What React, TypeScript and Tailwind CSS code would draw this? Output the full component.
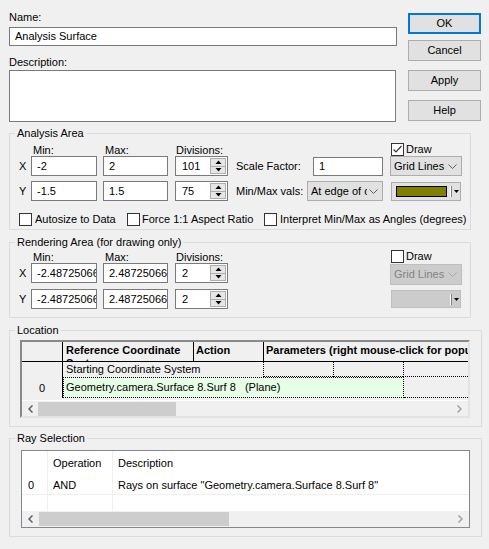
import React from "react";

const F = "font-['Liberation_Sans',Arial,sans-serif]";

function TextBox({ value, className = "" }: { value: string; className?: string }) {
  return (
    <div
      className={`border border-[#7a7a7a] bg-white pl-[5px] flex items-center overflow-hidden whitespace-nowrap shrink-0 ${className}`}
    >
      {value}
    </div>
  );
}

function Spinner({ value, className = "" }: { value: string; className?: string }) {
  return (
    <div className={`w-[53px] h-[20px] border border-[#7a7a7a] bg-white flex shrink-0 ${className}`}>
      <div className="flex-1 pl-[6px] flex items-center">{value}</div>
      <div className="w-[16px] my-[1px] mr-[1px] flex flex-col border border-[#adadad] bg-[#e6e6e6]">
        <div className="flex-1 flex items-center justify-center border-b border-[#adadad]">
          <svg width="7" height="4" viewBox="0 0 7 4">
            <path d="M0.5 4 L3.5 0.5 L6.5 4 Z" fill="#000" />
          </svg>
        </div>
        <div className="flex-1 flex items-center justify-center">
          <svg width="7" height="4" viewBox="0 0 7 4">
            <path d="M0.5 0 L3.5 3.5 L6.5 0 Z" fill="#000" />
          </svg>
        </div>
      </div>
    </div>
  );
}

function Select({
  text,
  className = "",
  disabled = false,
}: {
  text: string;
  className?: string;
  disabled?: boolean;
}) {
  return (
    <div
      className={`flex items-center border pl-[3px] pr-[4px] shrink-0 ${
        disabled
          ? "border-[#bfbfbf] bg-[#cccccc] text-[#838383]"
          : "border-[#adadad] bg-[#e1e1e1]"
      } ${className}`}
    >
      <span className="flex-1 overflow-hidden whitespace-nowrap mr-[2px]">{text}</span>
      <svg width="9" height="5" viewBox="0 0 9 5" className="shrink-0">
        <path
          d="M0.5 0.5 L4.5 4.5 L8.5 0.5"
          fill="none"
          stroke={disabled ? "#a8a8a8" : "#606060"}
          strokeWidth="1"
        />
      </svg>
    </div>
  );
}

function ColorButton({ disabled = false, className = "" }: { disabled?: boolean; className?: string }) {
  return (
    <div
      className={`w-[70px] flex items-center border pl-[4px] shrink-0 ${
        disabled ? "border-[#bfbfbf] bg-[#cccccc]" : "border-[#adadad] bg-[#e1e1e1]"
      } ${className}`}
    >
      <div
        className={`w-[51px] h-[11px] ${disabled ? "" : "border border-black bg-[#808000]"}`}
      />
      <div className="ml-[3px] w-[1px] h-[11px] bg-white" />
      <div className="w-[1px] h-[11px] bg-[#808080]" />
      <svg className="ml-[2px]" width="5" height="3" viewBox="0 0 5 3">
        <path d="M0 0 L2.5 3 L5 0 Z" fill="#000" />
      </svg>
    </div>
  );
}

function Check({ checked = false }: { checked?: boolean }) {
  return (
    <div className="w-[13px] h-[13px] border border-[#333333] bg-white flex items-center justify-center shrink-0">
      {checked && (
        <svg width="11" height="11" viewBox="0 0 11 11">
          <path d="M1.5 5.5 L4 8 L9.5 2" fill="none" stroke="#333333" strokeWidth="1.2" />
        </svg>
      )}
    </div>
  );
}

function Group({
  title,
  className = "",
  children,
}: {
  title: string;
  className?: string;
  children: React.ReactNode;
}) {
  return (
    <fieldset className={`border border-[#dcdcdc] ml-[9px] ${className}`}>
      <legend className="ml-[5px] px-[2px] leading-[14px]">{title}</legend>
      {children}
    </fieldset>
  );
}

function Button({ label, primary = false, className = "" }: { label: string; primary?: boolean; className?: string }) {
  return (
    <div
      className={`w-[73px] h-[21px] flex items-center justify-center bg-[#e1e1e1] ${
        primary ? "border-2 border-[#0078d7]" : "border border-[#adadad]"
      } ${className}`}
    >
      {label}
    </div>
  );
}

function ScrollBar({ thumbLeft, thumbWidth }: { thumbLeft: string; thumbWidth: string }) {
  return (
    <div className="h-[16px] flex items-center bg-[#f0f0f0]">
      <div className={`${thumbLeft} h-full flex items-center justify-center`}>
        <svg width="5" height="8" viewBox="0 0 5 8">
          <path d="M4.5 0.5 L1 4 L4.5 7.5" fill="none" stroke="#606060" strokeWidth="1.5" />
        </svg>
      </div>
      <div className={`${thumbWidth} h-[14px] bg-[#cdcdcd]`} />
      <div className="flex-1" />
      <div className="w-[17px] h-full flex items-center justify-center">
        <svg width="5" height="8" viewBox="0 0 5 8">
          <path d="M0.5 0.5 L4 4 L0.5 7.5" fill="none" stroke="#a0a0a0" strokeWidth="1.5" />
        </svg>
      </div>
    </div>
  );
}

export default function App() {
  return (
    <div className={`w-[489px] h-[549px] bg-[#f0f0f0] text-[11px] text-black overflow-hidden ${F}`}>
      {/* --- Name / Description + buttons --- */}
      <div className="flex pl-[9px]">
        <div className="w-[388px] pt-[10px]">
          <div className="h-[14px] leading-[14px]">Name:</div>
          <TextBox value="Analysis Surface" className="mt-[3px] h-[19px] w-[388px]" />
          <div className="mt-[9px] h-[14px] leading-[14px]">Description:</div>
          <div className="mt-[1px] w-[387px] h-[52px] border border-[#7a7a7a] bg-white" />
        </div>
        <div className="ml-[11px]">
          <Button label="OK" primary className="mt-[13px]" />
          <Button label="Cancel" className="mt-[6px]" />
          <Button label="Apply" className="mt-[9px]" />
          <Button label="Help" className="mt-[9px]" />
        </div>
      </div>

      {/* --- Analysis Area --- */}
      <Group title="Analysis Area" className="mt-[4px] w-[462px]">
        <div className="pt-[2px] pb-[3px] pl-[9px]">
          <div className="flex items-center h-[14px]">
            <div className="w-[14px]" />
            <div className="w-[72px] pt-[3px]">Min:</div>
            <div className="w-[71px] pt-[3px]">Max:</div>
            <div className="w-[215px] pt-[3px]">Divisions:</div>
            <Check checked />
            <span className="ml-[2px]">Draw</span>
          </div>
          <div className="flex items-center h-[20px]">
            <span className="w-[12px]">X</span>
            <TextBox value="-2" className="w-[66px] h-[20px]" />
            <TextBox value="2" className="ml-[6px] w-[65px] h-[20px]" />
            <Spinner value="101" className="ml-[7px]" />
            <span className="ml-[8px] w-[77px]">Scale Factor:</span>
            <TextBox value="1" className="w-[70px] h-[19px]" />
            <Select text="Grid Lines" className="ml-[7px] w-[72px] h-[20px]" />
          </div>
          <div className="flex items-center h-[20px] mt-[5px]">
            <span className="w-[12px]">Y</span>
            <TextBox value="-1.5" className="w-[66px] h-[20px]" />
            <TextBox value="1.5" className="ml-[6px] w-[65px] h-[20px]" />
            <Spinner value="75" className="ml-[7px]" />
            <span className="ml-[8px] w-[71px]">Min/Max vals:</span>
            <Select text="At edge of cell" className="w-[76px] h-[20px]" />
            <ColorButton className="ml-[8px] h-[19px]" />
          </div>
          <div className="flex items-center h-[13px] mt-[12px] whitespace-nowrap">
            <div className="w-[108px] flex items-center gap-[3px]">
              <Check />
              <span>Autosize to Data</span>
            </div>
            <div className="w-[137px] flex items-center gap-[2px]">
              <Check />
              <span>Force 1:1 Aspect Ratio</span>
            </div>
            <div className="flex items-center gap-[3px]">
              <Check />
              <span>Interpret Min/Max as Angles (degrees)</span>
            </div>
          </div>
        </div>
      </Group>

      {/* --- Rendering Area --- */}
      <Group title="Rendering Area (for drawing only)" className="mt-[5px] w-[462px]">
        <div className="pb-[8px] pl-[9px]">
          <div className="flex items-center h-[14px]">
            <div className="w-[14px]" />
            <div className="w-[72px] pt-[3px]">Min:</div>
            <div className="w-[71px] pt-[3px]">Max:</div>
            <div className="w-[215px] pt-[3px]">Divisions:</div>
            <Check />
            <span className="ml-[2px]">Draw</span>
          </div>
          <div className="flex items-center h-[20px]">
            <span className="w-[12px]">X</span>
            <TextBox value="-2.48725066" className="w-[66px] h-[20px]" />
            <TextBox value="2.48725066" className="ml-[6px] w-[65px] h-[20px]" />
            <Spinner value="2" className="ml-[7px]" />
            <Select text="Grid Lines" disabled className="ml-[162px] mt-[3px] w-[72px] h-[21px]" />
          </div>
          <div className="flex items-center h-[20px] mt-[6px]">
            <span className="w-[12px]">Y</span>
            <TextBox value="-2.48725066" className="w-[66px] h-[20px]" />
            <TextBox value="2.48725066" className="ml-[6px] w-[65px] h-[20px]" />
            <Spinner value="2" className="ml-[7px]" />
            <ColorButton disabled className="ml-[163px] h-[18px]" />
          </div>
        </div>
      </Group>

      {/* --- Location --- */}
      <Group title="Location" className="mt-[5px] w-[473px]">
        <div className="pt-[3px] pb-[8px] pl-[10px]">
          <div className="w-[450px] h-[78px] border-2 border-t-[#8a8a8a] border-l-[#8a8a8a] border-r-[#e3e3e3] border-b-[#e3e3e3] bg-[#f0f0f0] overflow-hidden">
            <div className="flex h-[20px] border-b border-black font-bold">
              <div className="w-[41px] border-r border-black" />
              <div className="w-[131px] h-[19px] border-r border-black overflow-hidden pl-[3px] pt-[2px] leading-[13px]">
                Reference Coordinate System
              </div>
              <div className="w-[70px] border-r border-black pl-[2px] pt-[2px] leading-[13px] whitespace-nowrap overflow-hidden">
                Action
              </div>
              <div className="flex-1 pl-[2px] pt-[2px] leading-[13px] whitespace-nowrap overflow-hidden">
                Parameters (right mouse-click for popup menu)
              </div>
            </div>
            <div className="flex h-[36px]">
              <div className="w-[41px] border-r border-black flex items-end justify-center pb-[3px] leading-[13px]">
                0
              </div>
              <div className="flex-1 flex flex-col">
                <div className="flex h-[15px]">
                  <div className="w-[200px] pl-[3px] leading-[14px] whitespace-nowrap overflow-hidden">
                    Starting Coordinate System
                  </div>
                  <div className="w-[70px] border-l border-b border-dotted border-black" />
                  <div className="w-[70px] border-l border-b border-dotted border-black" />
                  <div className="flex-1 border-l border-b border-dotted border-black" />
                </div>
                <div className="flex h-[21px]">
                  <div className="w-[341px] border border-dotted border-black bg-[#e6ffe6] pl-[2px] flex items-center whitespace-pre">
                    {"Geometry.camera.Surface 8.Surf 8   (Plane)"}
                  </div>
                  <div className="flex-1 border-b border-dotted border-black" />
                </div>
              </div>
            </div>
            <div className="h-[3px] border-b border-white" />
            <ScrollBar thumbLeft="w-[16px]" thumbWidth="w-[138px]" />
          </div>
        </div>
      </Group>

      {/* --- Ray Selection --- */}
      <Group title="Ray Selection" className="mt-[4px] w-[473px]">
        <div className="pt-[5px] pb-[8px] pl-[11px]">
          <div className="w-[449px] h-[78px] border border-[#828790] bg-white overflow-hidden">
            <div className="flex h-[25px] items-center">
              <div className="w-[26px] h-full border-r border-[#f0f0f0]" />
              <div className="w-[65px] h-full border-r border-[#f0f0f0] pl-[5px] flex items-center">Operation</div>
              <div className="flex-1 pl-[5px]">Description</div>
            </div>
            <div className="flex h-[19px] border-b border-[#f0f0f0]">
              <div className="w-[26px] border-r border-[#f0f0f0] pl-[6px] flex items-center">0</div>
              <div className="w-[65px] border-r border-[#f0f0f0] pl-[5px] flex items-center">AND</div>
              <div className="flex-1 pl-[5px] flex items-center whitespace-nowrap">
                Rays on surface "Geometry.camera.Surface 8.Surf 8"
              </div>
            </div>
            <div className="flex h-[16px]">
              <div className="w-[26px] border-r border-[#f0f0f0]" />
              <div className="w-[65px] border-r border-[#f0f0f0]" />
              <div className="flex-1" />
            </div>
            <ScrollBar thumbLeft="w-[17px]" thumbWidth="w-[190px]" />
          </div>
        </div>
      </Group>
    </div>
  );
}
